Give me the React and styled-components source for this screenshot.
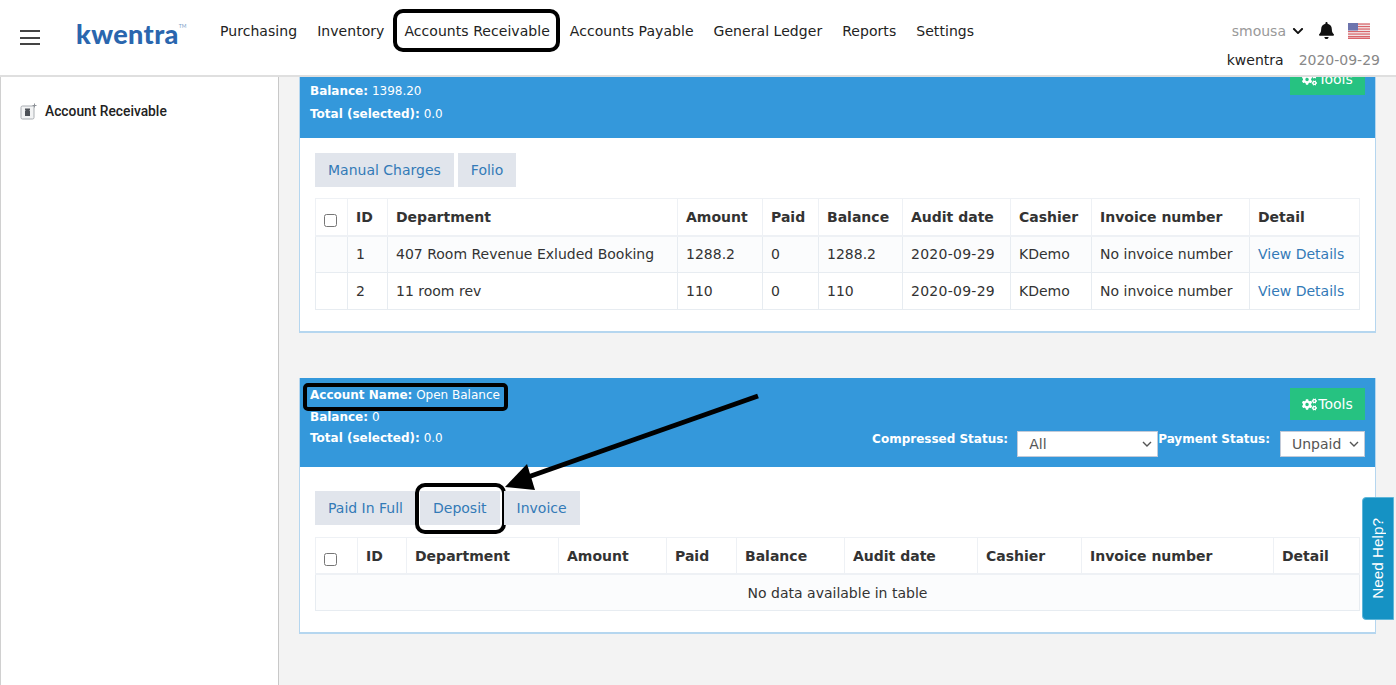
import React from "react";
import styled, { createGlobalStyle } from "styled-components";
import { FaBell, FaChevronDown, FaCogs } from "react-icons/fa";

const Global = createGlobalStyle`
  html, body { margin: 0; padding: 0; height: 100%; overflow: hidden; }
  body { font-family: "DejaVu Sans", Verdana, sans-serif; font-size: 14px; color: #333; background: #f3f3f3; }
  * { box-sizing: border-box; }
`;

const Page = styled.div`
  position: relative;
  width: 1396px;
  height: 685px;
  overflow: hidden;
`;

const Header = styled.header`
  display: flex;
  align-items: flex-start;
  height: 77px;
  background: #fff;
  border-bottom: 2px solid #dfdfdf;
  padding-left: 20px;
`;

const Burger = styled.button`
  display: flex;
  flex-direction: column;
  gap: 4.6px;
  width: 20px;
  margin-top: 30px;
  padding: 0;
  border: 0;
  background: none;
  span { display: block; height: 2px; background: #444; }
`;

const Logo = styled.div`
  display: flex;
  flex: 0 0 144px;
  margin: 18px 0 0 36px;
  font-family: "Lato", "Open Sans", sans-serif;
  font-weight: 900;
  font-size: 27px;
  line-height: 32px;
  letter-spacing: 0.4px;
  color: #2a66ae;
  sup { font-size: 5px; line-height: 16px; font-weight: 400; color: #7aa0c8; letter-spacing: 0; }
`;

const Nav = styled.nav`
  display: flex;
  gap: 20px;
  margin-top: 22px;
  line-height: 18px;
  color: #222;
  letter-spacing: 0.05px;
`;

const NavItem = styled.a`
  position: relative;
  white-space: nowrap;
`;

const Ring = styled.span`
  position: absolute;
  border: 4px solid #000;
  pointer-events: none;
  border-radius: ${p => p.$r || 10}px;
  top: ${p => p.$t}px;
  bottom: ${p => p.$b}px;
  left: ${p => p.$l}px;
  right: ${p => p.$e}px;
`;

const UserBlock = styled.div`
  margin-left: auto;
  display: flex;
  flex-direction: column;
  align-items: flex-end;
  padding-right: 16px;
  padding-top: 22px;
`;

const UserRow = styled.div`
  display: flex;
  align-items: center;
  height: 18px;
  color: #999;
  padding-right: 10px;
  svg { display: block; }
`;

const UserName = styled.span`
  margin-right: 6px;
`;

const BellWrap = styled.span`
  margin: -2px 13px 0 14px;
  color: #111;
  display: flex;
`;

const CompanyRow = styled.div`
  display: flex;
  gap: 15px;
  margin-top: 11px;
  line-height: 18px;
  color: #888;
  b { font-weight: 400; color: #222; }
`;

const Body = styled.div`
  display: flex;
  height: 608px;
  overflow: hidden;
`;

const Sidebar = styled.aside`
  flex: 0 0 279px;
  background: #fff;
  border-left: 1px solid #d0d0d0;
  border-right: 1px solid #c8c8c8;
  padding: 25px 0 0 19px;
  display: flex;
  align-items: flex-start;
  gap: 8px;
  font-family: "Roboto", sans-serif;
  font-weight: 500;
  font-size: 13.8px;
  line-height: 18px;
  color: #222;
`;

const Main = styled.main`
  flex: 1;
  padding: 0 20px;
  overflow: hidden;
`;

const Stack = styled.div`
  margin-top: -24px;
  display: flex;
  flex-direction: column;
  gap: 45px;
`;

const Panel = styled.section`
  background: #fff;
  border: 1px solid #b5d6ef;
  border-top: 0;
  border-bottom-width: 2px;
`;

const PanelHead = styled.div`
  display: flex;
  justify-content: space-between;
  background: #3498db;
  color: #fff;
  font-size: 12px;
`;

const HeadLines = styled.div`
  padding: ${p => p.$top}px 0 ${p => p.$bottom}px 10px;
  line-height: ${p => p.$lh}px;
  div { white-space: nowrap; position: relative; width: fit-content; }
`;

const HeadRight = styled.div`
  display: flex;
  flex-direction: column;
  align-items: flex-end;
  padding: 10px 10px 0 0;
`;

const ToolsButton = styled.button`
  display: flex;
  align-items: center;
  justify-content: center;
  gap: 1px;
  width: 75px;
  height: 32px;
  padding: 0;
  border: 0;
  background: #26c281;
  color: #fff;
  font: 14px "DejaVu Sans", sans-serif;
`;

const Filters = styled.div`
  display: flex;
  margin-top: 11px;
  align-items: flex-start;
`;

const FilterLabel = styled.label`
  font-weight: 700;
  font-size: 12px;
  line-height: 16px;
  margin-right: ${p => p.$gap}px;
`;

const Select = styled.select`
  appearance: none;
  width: ${p => p.$w}px;
  height: 26px;
  padding: 0 0 0 11px;
  background: #fff url("data:image/svg+xml,%3Csvg xmlns='http://www.w3.org/2000/svg' width='10' height='6' viewBox='0 0 10 6'%3E%3Cpath d='M1 1l4 4 4-4' fill='none' stroke='%23555' stroke-width='1.4'/%3E%3C/svg%3E") no-repeat right 5px center;
  border: 1px solid #c2cad8;
  border-radius: 0;
  color: #555;
  font: 14px "DejaVu Sans", sans-serif;
`;

const PanelBody = styled.div`
  padding: ${p => p.$top}px 16px 21px 15px;
`;

const Buttons = styled.div`
  display: flex;
  gap: 4px;
  margin-bottom: ${p => p.$below}px;
`;

const ActionButton = styled.button`
  position: relative;
  height: 34px;
  padding: 0 13px;
  border: 0;
  background: #e1e5ec;
  color: #337ab7;
  font: 14px "DejaVu Sans", sans-serif;
  white-space: nowrap;
`;

const Table = styled.table`
  width: 100%;
  table-layout: fixed;
  border-collapse: collapse;
  font-size: 14px;
`;

const Col = styled.col`
  width: ${p => p.$w}px;
`;

const Th = styled.th`
  height: 37px;
  padding: 1px 8px 0;
  text-align: left;
  font-weight: 700;
  color: #333;
  border: 1px solid #eef1f5;
  border-bottom: 2px solid #eef1f5;
  white-space: nowrap;
`;

const CheckTh = styled(Th)`
  padding: 8px 0 0 8px;
  input { display: block; margin: 0; width: 13px; height: 13px; }
`;

const Tr = styled.tr`
  background: ${p => (p.$odd ? "#fbfcfd" : "#fff")};
`;

const Td = styled.td`
  height: ${p => p.$h || 37}px;
  padding: 0 8px;
  border: 1px solid #e7ecf1;
  white-space: nowrap;
  text-align: ${p => p.$align || "left"};
  color: #333;
  letter-spacing: ${p => (p.$date ? "0.26px" : "0")};
  a { color: #337ab7; }
`;

const Help = styled.div`
  position: absolute;
  left: 1362px;
  top: 497px;
  width: 32px;
  height: 123px;
  display: flex;
  align-items: center;
  justify-content: center;
  background: #1592c4;
  border: 1px solid #5fb6d9;
  border-radius: 4px 0 0 4px;
  color: #fff;
  font-family: "Liberation Sans", Arial, sans-serif;
  font-size: 15.3px;
  span { writing-mode: vertical-rl; transform: rotate(180deg); white-space: nowrap; }
`;

const ArrowLayer = styled.svg`
  position: absolute;
  inset: 0;
  pointer-events: none;
`;

const SidebarIcon = styled.svg`
  flex: none;
  margin-top: 1px;
`;

const Flag = () => (
  <svg width="22" height="16" viewBox="0 0 22 16">
    <rect width="22" height="16" rx="1.5" fill="#f4f4f4" />
    {[0, 2.5, 5, 7.5, 10, 12.5].map(y => (
      <rect key={y} y={y + 0.4} width="22" height="1.3" fill="#d9656b" />
    ))}
    <rect y="14.6" width="22" height="1.4" fill="#d9656b" />
    <rect width="10" height="7.5" fill="#6d74ad" />
  </svg>
);

const AccountIcon = () => (
  <SidebarIcon width="17" height="17" viewBox="0 0 17 17">
    <rect x="1" y="3" width="13" height="13" rx="1.5" fill="#f2f3f4" stroke="#a9adb2" />
    <path d="M5 5.5h5v1.3l-.6.6.6 .6v5H5v-5l.6-.6-.6-.6z" fill="#4d5157" />
    <path d="M14.5 0.5v4M12.5 2.5h4" stroke="#8d9197" strokeWidth="1" />
  </SidebarIcon>
);

const cols1 = [32, 40, 290, 85, 56, 84, 108, 81, 158, 110];
const cols2 = [42, 49, 152, 108, 70, 108, 133, 104, 192, 86];
const heads = ["ID", "Department", "Amount", "Paid", "Balance", "Audit date", "Cashier", "Invoice number", "Detail"];
const rows1 = [
  ["1", "407 Room Revenue Exluded Booking", "1288.2", "0", "1288.2", "2020-09-29", "KDemo", "No invoice number"],
  ["2", "11 room rev", "110", "0", "110", "2020-09-29", "KDemo", "No invoice number"],
];

const TableHead = ({ cols }) => (
  <>
    <colgroup>
      {cols.map((w, i) => (
        <Col key={i} $w={w} />
      ))}
    </colgroup>
    <thead>
      <tr>
        <CheckTh>
          <input type="checkbox" />
        </CheckTh>
        {heads.map(h => (
          <Th key={h}>{h}</Th>
        ))}
      </tr>
    </thead>
  </>
);

export default function App() {
  return (
    <Page>
      <Global />
      <Header>
        <Burger aria-label="menu">
          <span />
          <span />
          <span />
        </Burger>
        <Logo>
          kwentra<sup>TM</sup>
        </Logo>
        <Nav>
          <NavItem>Purchasing</NavItem>
          <NavItem>Inventory</NavItem>
          <NavItem>
            Accounts Receivable
            <Ring $t={-13} $b={-12} $l={-11} $e={-10} />
          </NavItem>
          <NavItem>Accounts Payable</NavItem>
          <NavItem>General Ledger</NavItem>
          <NavItem>Reports</NavItem>
          <NavItem>Settings</NavItem>
        </Nav>
        <UserBlock>
          <UserRow>
            <UserName>smousa</UserName>
            <FaChevronDown size={12} color="#111" />
            <BellWrap>
              <FaBell size={17} />
            </BellWrap>
            <Flag />
          </UserRow>
          <CompanyRow>
            <b>kwentra</b>
            <span>2020-09-29</span>
          </CompanyRow>
        </UserBlock>
      </Header>
      <Body>
        <Sidebar>
          <AccountIcon />
          <span>Account Receivable</span>
        </Sidebar>
        <Main>
          <Stack>
            <Panel>
              <PanelHead>
                <HeadLines $top={27} $bottom={12} $lh={23}>
                  <div>
                    <b>Balance:</b> 1398.20
                  </div>
                  <div>
                    <b>Total (selected):</b> 0.0
                  </div>
                </HeadLines>
                <HeadRight>
                  <ToolsButton>
                    <FaCogs size={15} />
                    Tools
                  </ToolsButton>
                </HeadRight>
              </PanelHead>
              <PanelBody $top={15}>
                <Buttons $below={11}>
                  <ActionButton>Manual Charges</ActionButton>
                  <ActionButton>Folio</ActionButton>
                </Buttons>
                <Table>
                  <TableHead cols={cols1} />
                  <tbody>
                    {rows1.map((r, i) => (
                      <Tr key={r[0]} $odd={i === 0}>
                        <Td />
                        {r.map((c, j) => (
                          <Td key={j} $date={j === 5}>
                            {c}
                          </Td>
                        ))}
                        <Td>
                          <a>View Details</a>
                        </Td>
                      </Tr>
                    ))}
                  </tbody>
                </Table>
              </PanelBody>
            </Panel>
            <Panel>
              <PanelHead>
                <HeadLines $top={7} $bottom={17} $lh={21.6}>
                  <div>
                    <b>Account Name:</b> Open Balance
                    <Ring $t={-2} $b={-4} $l={-7} $e={-8} $r={5} />
                  </div>
                  <div>
                    <b>Balance:</b> 0
                  </div>
                  <div>
                    <b>Total (selected):</b> 0.0
                  </div>
                </HeadLines>
                <HeadRight>
                  <ToolsButton>
                    <FaCogs size={15} />
                    Tools
                  </ToolsButton>
                  <Filters>
                    <FilterLabel $gap={9}>Compressed Status:</FilterLabel>
                    <Select $w={141} defaultValue="All">
                      <option>All</option>
                    </Select>
                    <FilterLabel $gap={10}>Payment Status:</FilterLabel>
                    <Select $w={85} defaultValue="Unpaid">
                      <option>Unpaid</option>
                    </Select>
                  </Filters>
                </HeadRight>
              </PanelHead>
              <PanelBody $top={24}>
                <Buttons $below={12}>
                  <ActionButton>Paid In Full</ActionButton>
                  <ActionButton>
                    Deposit
                    <Ring $t={-8} $b={-9} $l={-5} $e={-6} />
                  </ActionButton>
                  <ActionButton>Invoice</ActionButton>
                </Buttons>
                <Table>
                  <TableHead cols={cols2} />
                  <tbody>
                    <Tr $odd>
                      <Td colSpan={10} $align="center" $h={36}>
                        No data available in table
                      </Td>
                    </Tr>
                  </tbody>
                </Table>
              </PanelBody>
            </Panel>
          </Stack>
        </Main>
      </Body>
      <ArrowLayer width="1396" height="685" viewBox="0 0 1396 685">
        <line x1="758" y1="396" x2="528" y2="477" stroke="#000" strokeWidth="5" />
        <polygon points="505,487 527,464 535,490" fill="#000" />
      </ArrowLayer>
      <Help>
        <span>Need Help?</span>
      </Help>
    </Page>
  );
}
